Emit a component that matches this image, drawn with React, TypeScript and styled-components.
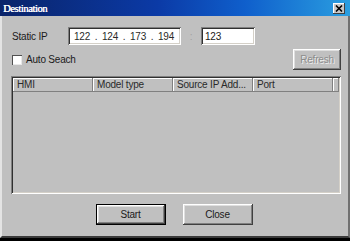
import styled, { createGlobalStyle } from "styled-components";

const GlobalStyle = createGlobalStyle`
  html, body {
    margin: 0;
    padding: 0;
    background: #000;
  }
  body {
    width: 350px;
    height: 241px;
    overflow: hidden;
    font-family: "Liberation Sans", Arial, sans-serif;
    font-size: 10px;
    letter-spacing: -0.2px;
    color: #1a1a1a;
  }
`;

const Window = styled.div`
  width: 350px;
  height: 238px;
  display: flex;
  flex-direction: column;
  background: #c0c0c0;
`;

const TitleBar = styled.div`
  height: 16px;
  flex: none;
  display: flex;
  align-items: center;
  justify-content: space-between;
  padding: 0 5px 0 3px;
  background: linear-gradient(to right, #0a246a 0%, #0b3aa6 45%, #0f5fcc 70%, #2a9ee0 100%);
`;

const Title = styled.span`
  font-family: "Liberation Serif", serif;
  font-size: 10.5px;
  letter-spacing: -0.4px;
  color: #fff;
  text-shadow: 0.4px 0 #fff;
`;

const CloseBox = styled.div`
  width: 12px;
  height: 11px;
  background: #c8c8c8;
  display: flex;
  align-items: center;
  justify-content: center;
  box-shadow: inset -1px -1px #404040, inset 1px 1px #fff;
`;

const Body = styled.div`
  flex: 1;
  display: flex;
  flex-direction: column;
  padding: 11px 7px 0 9px;
  border-left: 2px solid #e4e4e4;
  border-right: 2px solid #707070;
  border-bottom: 2px solid #3a3a3a;
`;

const Row = styled.div<{ $gap?: number }>`
  display: flex;
  align-items: center;
  margin-top: ${(p) => p.$gap ?? 0}px;
`;

const Label = styled.span`
  width: 56px;
  padding-left: 1px;
`;

const Sunken = styled.div<{ $w: number }>`
  width: ${(p) => p.$w}px;
  height: 18px;
  box-sizing: border-box;
  background: #fff;
  display: flex;
  align-items: center;
  box-shadow: inset 1px 1px #808080, inset -1px -1px #fff, inset 2px 2px #303030,
    inset -2px -2px #d4d0c8;
`;

const IpField = styled.span`
  width: 20px;
  text-align: center;
  color: #2a2a2a;
`;

const IpDot = styled.span`
  width: 8px;
  text-align: center;
  color: #2a2a2a;
`;

const Colon = styled.span`
  width: 20px;
  text-align: center;
  color: #a0a0a0;
`;

const PortText = styled.span`
  padding-left: 4px;
`;

const CheckWrap = styled.label`
  flex: 1;
  display: flex;
  align-items: center;
  padding-left: 1px;
`;

const CheckBox = styled.span`
  width: 10px;
  height: 10px;
  margin-right: 4px;
  box-sizing: border-box;
  background: #fff;
  box-shadow: inset 1px 1px #505050, inset -1px -1px #e8e8e8;
`;

const Button = styled.button<{ $w: number; $default?: boolean }>`
  width: ${(p) => p.$w}px;
  height: 21px;
  padding: 0;
  box-sizing: border-box;
  font: inherit;
  letter-spacing: inherit;
  color: #1a1a1a;
  background: #c0c0c0;
  border: ${(p) => (p.$default ? "1px solid #000" : "none")};
  box-shadow: inset -1px -1px #404040, inset 1px 1px #fff, inset -2px -2px #808080,
    inset 2px 2px #dfdfdf;
  &:disabled {
    color: #8c8c8c;
    text-shadow: 1px 1px #eee;
  }
`;

const ListView = styled.div`
  margin-top: 6px;
  height: 118px;
  box-sizing: border-box;
  padding: 2px;
  background: #c0c0c0;
  box-shadow: inset 1px 1px #808080, inset -1px -1px #fff, inset 2px 2px #303030,
    inset -2px -2px #d4d0c8;
`;

const Header = styled.div`
  display: flex;
  height: 14px;
`;

const HeaderCell = styled.div<{ $w?: number }>`
  width: ${(p) => (p.$w ? `${p.$w}px` : "auto")};
  flex: ${(p) => (p.$w ? "none" : 1)};
  box-sizing: border-box;
  padding-left: 4px;
  line-height: 13px;
  white-space: nowrap;
  overflow: hidden;
  color: #2a2a2a;
  box-shadow: inset -1px -1px #808080, inset 1px 1px #fff;
`;

const ButtonRow = styled.div`
  margin-top: 10px;
  display: flex;
  justify-content: center;
  gap: 17px;
  padding-right: 4px;
`;

const columns = ["HMI", "Model type", "Source IP Add...", "Port"];
const ip = ["122", "124", "173", "194"];

export default function App() {
  return (
    <>
      <GlobalStyle />
      <Window>
        <TitleBar>
          <Title>Destination</Title>
          <CloseBox>
            <svg width="8" height="7" viewBox="0 0 8 7">
              <path d="M1 0.5 L7 6.5 M7 0.5 L1 6.5" stroke="#000" strokeWidth="1.6" />
            </svg>
          </CloseBox>
        </TitleBar>
        <Body>
          <Row>
            <Label>Static IP</Label>
            <Sunken $w={113}>
              <span style={{ width: 4 }} />
              {ip.map((part, i) => (
                <span key={i} style={{ display: "contents" }}>
                  {i > 0 && <IpDot>.</IpDot>}
                  <IpField>{part}</IpField>
                </span>
              ))}
            </Sunken>
            <Colon>:</Colon>
            <Sunken $w={54}>
              <PortText>123</PortText>
            </Sunken>
          </Row>
          <Row $gap={4}>
            <CheckWrap>
              <CheckBox />
              Auto Seach
            </CheckWrap>
            <Button $w={48} disabled>
              Refresh
            </Button>
          </Row>
          <ListView>
            <Header>
              {columns.map((c) => (
                <HeaderCell key={c} $w={80}>
                  {c}
                </HeaderCell>
              ))}
              <HeaderCell />
            </Header>
          </ListView>
          <ButtonRow>
            <Button $w={70} $default>
              Start
            </Button>
            <Button $w={70}>Close</Button>
          </ButtonRow>
        </Body>
      </Window>
    </>
  );
}
